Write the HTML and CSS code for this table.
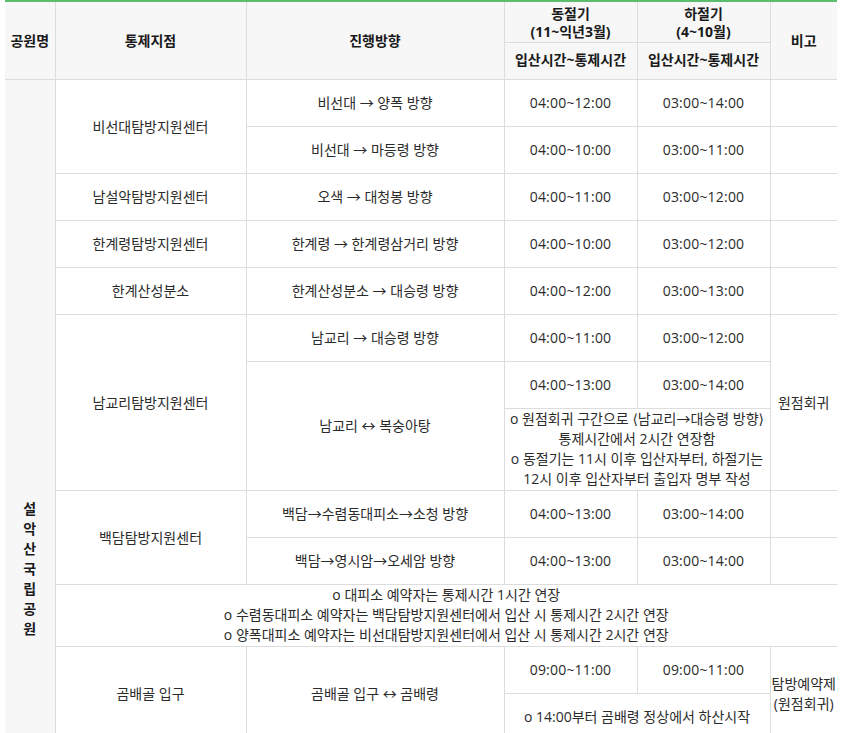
FILE: index.html
```html
<!DOCTYPE html>
<html lang="ko">
<head>
<meta charset="utf-8">
<title>설악산국립공원 탐방로 통제시간</title>
<link rel="stylesheet" href="styles.css">
</head>
<body>
<table class="schedule">
  <colgroup>
    <col class="c-park">
    <col class="c-point">
    <col class="c-dir">
    <col class="c-time">
    <col class="c-time">
    <col class="c-note">
  </colgroup>
  <thead>
    <tr>
      <th rowspan="2" class="span2">공원명</th>
      <th rowspan="2" class="span2">통제지점</th>
      <th rowspan="2" class="span2">진행방향</th>
      <th class="season">동절기<br>(11~익년3월)</th>
      <th class="season">하절기<br>(4~10월)</th>
      <th rowspan="2" class="span2">비고</th>
    </tr>
    <tr>
      <th class="sub">입산시간~통제시간</th>
      <th class="sub">입산시간~통제시간</th>
    </tr>
  </thead>
  <tbody>
    <tr>
      <th rowspan="14" class="park">설<br>악<br>산<br>국<br>립<br>공<br>원</th>
      <td rowspan="2">비선대탐방지원센터</td>
      <td>비선대 → 양폭 방향</td>
      <td class="time">04:00~12:00</td>
      <td class="time">03:00~14:00</td>
      <td></td>
    </tr>
    <tr>
      <td>비선대 → 마등령 방향</td>
      <td class="time">04:00~10:00</td>
      <td class="time">03:00~11:00</td>
      <td></td>
    </tr>
    <tr>
      <td>남설악탐방지원센터</td>
      <td>오색 → 대청봉 방향</td>
      <td class="time">04:00~11:00</td>
      <td class="time">03:00~12:00</td>
      <td></td>
    </tr>
    <tr>
      <td>한계령탐방지원센터</td>
      <td>한계령 → 한계령삼거리 방향</td>
      <td class="time">04:00~10:00</td>
      <td class="time">03:00~12:00</td>
      <td></td>
    </tr>
    <tr>
      <td>한계산성분소</td>
      <td>한계산성분소 → 대승령 방향</td>
      <td class="time">04:00~12:00</td>
      <td class="time">03:00~13:00</td>
      <td></td>
    </tr>
    <tr>
      <td rowspan="3">남교리탐방지원센터</td>
      <td>남교리 → 대승령 방향</td>
      <td class="time">04:00~11:00</td>
      <td class="time">03:00~12:00</td>
      <td rowspan="3">원점회귀</td>
    </tr>
    <tr>
      <td rowspan="2">남교리 ↔ 복숭아탕</td>
      <td class="time">04:00~13:00</td>
      <td class="time">03:00~14:00</td>
    </tr>
    <tr>
      <td colspan="2" class="memo">o 원점회귀 구간으로 <span class="ang">⟨</span>남교리→대승령 방향<span class="ang">⟩</span><br>통제시간에서 2시간 연장함<br>o 동절기는 11시 이후 입산자부터, 하절기는<br>12시 이후 입산자부터 출입자 명부 작성</td>
    </tr>
    <tr>
      <td rowspan="2">백담탐방지원센터</td>
      <td>백담→수렴동대피소→소청 방향</td>
      <td class="time">04:00~13:00</td>
      <td class="time">03:00~14:00</td>
      <td></td>
    </tr>
    <tr>
      <td>백담→영시암→오세암 방향</td>
      <td class="time">04:00~13:00</td>
      <td class="time">03:00~14:00</td>
      <td></td>
    </tr>
    <tr>
      <td colspan="5" class="memo">o 대피소 예약자는 통제시간 1시간 연장<br>o 수렴동대피소 예약자는 백담탐방지원센터에서 입산 시 통제시간 2시간 연장<br>o 양폭대피소 예약자는 비선대탐방지원센터에서 입산 시 통제시간 2시간 연장</td>
    </tr>
    <tr>
      <td rowspan="2">곰배골 입구</td>
      <td rowspan="2">곰배골 입구 ↔ 곰배령</td>
      <td class="time">09:00~11:00</td>
      <td class="time">09:00~11:00</td>
      <td rowspan="2" class="remark">탐방예약제<br>(원점회귀)</td>
    </tr>
    <tr>
      <td colspan="2">o 14:00부터 곰배령 정상에서 하산시작</td>
    </tr>
    <tr class="spacer">
      <td colspan="5"></td>
    </tr>
  </tbody>
</table>
</body>
</html>
```
FILE: styles.css
```css
html, body {
  margin: 0;
  background: #ffffff;
}

body {
  padding: 0 0 0 5px;
  font-family: "Open Sans", "Noto Sans CJK KR", sans-serif;
  font-size: 14px;
  color: #2b2b2b;
}

.schedule {
  border-collapse: collapse;
  table-layout: fixed;
  width: 832px;
  border-top: 2px solid #5bbd6e;
  border-left: hidden;
  border-right: hidden;
}

.c-park { width: 50px; }
.c-point { width: 191px; }
.c-dir { width: 258px; }
.c-time { width: 133px; }
.c-note { width: 67px; }

.schedule th,
.schedule td {
  border: 1px solid #dddddd;
  text-align: center;
  vertical-align: middle;
  line-height: 20px;
  padding: 13px 0;
  font-weight: normal;
  white-space: nowrap;
}

.schedule thead th {
  background: #f7f7f7;
  color: #1a1a1a;
  font-weight: bold;
  line-height: 18px;
}

.schedule thead th.span2 {
  padding: 0;
}

.schedule thead th.season {
  padding: 3px 0 1px;
}

.schedule thead th.sub {
  padding: 8px 0 10px;
}

.schedule tbody th.park {
  background: #f7f7f7;
  color: #1a1a1a;
  font-weight: bold;
  padding: 0;
}

.schedule td.time {
  font-size: 14px;
  letter-spacing: 0.2px;
}

.schedule td.memo {
  padding: 0 0 1px;
}

.schedule td.remark {
  padding: 0;
}

.ang {
  font-family: "DejaVu Sans", sans-serif;
}

.spacer td {
  height: 316px;
  padding: 0;
}
```
